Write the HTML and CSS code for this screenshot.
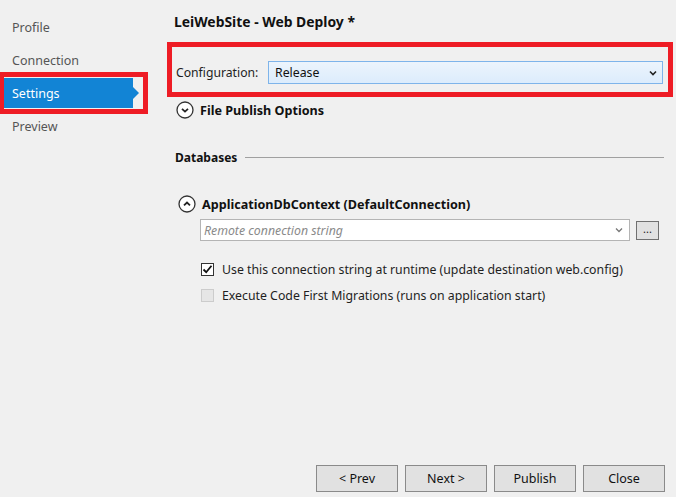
FILE: index.html
```html
<!DOCTYPE html>
<html>
<head>
<meta charset="utf-8">
<link rel="stylesheet" href="styles.css">
</head>
<body>
<div class="page">
  <nav class="nav">
    <div class="nav-item">Profile</div>
    <div class="nav-item">Connection</div>
    <div class="nav-item selected">Settings<span class="arrow"></span></div>
    <div class="nav-item">Preview</div>
    <div class="annot annot-nav"></div>
  </nav>
  <main class="main">
    <div class="title">LeiWebSite - Web Deploy *</div>
    <div class="config-row">
      <span class="label">Configuration:</span>
      <div class="select">
        <span>Release</span>
        <svg class="chev" width="8" height="6" viewBox="0 0 8 6"><path d="M1 1.5 L4 4.5 L7 1.5" fill="none" stroke="#222" stroke-width="1.6"/></svg>
      </div>
    </div>
    <div class="expander first">
      <svg class="circ" width="18" height="18" viewBox="0 0 18 18"><circle cx="9" cy="9" r="8" fill="#fff" stroke="#333" stroke-width="1.3"/><path d="M6 7.8 L9 10.6 L12 7.8" fill="none" stroke="#222" stroke-width="1.8"/></svg>
      <span class="exp-text">File Publish Options</span>
    </div>
    <div class="section">
      <span class="section-title">Databases</span>
      <span class="rule"></span>
    </div>
    <div class="expander second">
      <svg class="circ" width="18" height="18" viewBox="0 0 18 18"><circle cx="9" cy="9" r="8" fill="#fff" stroke="#333" stroke-width="1.3"/><path d="M6 10.4 L9 7.6 L12 10.4" fill="none" stroke="#222" stroke-width="1.8"/></svg>
      <span class="exp-text">ApplicationDbContext (DefaultConnection)</span>
    </div>
    <div class="conn-row">
      <div class="combo">
        <span class="placeholder">Remote connection string</span>
        <svg class="chev" width="8" height="6" viewBox="0 0 8 6"><path d="M1 1.5 L4 4.5 L7 1.5" fill="none" stroke="#777" stroke-width="1.3"/></svg>
      </div>
      <div class="dots">...</div>
    </div>
    <div class="check-row first-check">
      <span class="box checked"><svg width="11" height="11" viewBox="0 0 11 11"><path d="M1.5 5.5 L4.2 8.2 L9.5 1.8" fill="none" stroke="#111" stroke-width="1.8"/></svg></span>
      <span class="check-text">Use this connection string at runtime (update destination web.config)</span>
    </div>
    <div class="check-row second-check">
      <span class="box disabled"></span>
      <span class="check-text">Execute Code First Migrations (runs on application start)</span>
    </div>
    <div class="buttons">
      <button class="btn">&lt; Prev</button>
      <button class="btn">Next &gt;</button>
      <button class="btn">Publish</button>
      <button class="btn">Close</button>
    </div>
  </main>
</div>
</body>
</html>
```

FILE: styles.css
```css
* { box-sizing: border-box; }
html, body { margin: 0; padding: 0; }
body {
  background: #f0f0f0;
  font-family: "Noto Sans", "Open Sans", sans-serif;
  font-size: 12px;
  color: #1e1e1e;
  width: 676px;
  height: 497px;
  overflow: hidden;
}
.page {
  display: flex;
  height: 497px;
}
.nav {
  position: relative;
  width: 167px;
  flex: none;
  padding-top: 12px;
}
.nav-item {
  position: relative;
  height: 30px;
  margin-bottom: 3px;
  line-height: 31px;
  padding-left: 12px;
  color: #555;
  font-size: 12.5px;
}
.nav-item.selected {
  background: #1284d5;
  color: #fff;
  margin-left: 4px;
  width: 129px;
  padding-left: 8px;
}
.arrow {
  position: absolute;
  right: -6px;
  top: 9px;
  width: 0;
  height: 0;
  border-top: 6px solid transparent;
  border-bottom: 6px solid transparent;
  border-left: 6px solid #1284d5;
}
.annot {
  position: absolute;
  border: 5px solid #ee1c25;
}
.annot-nav {
  left: 0;
  top: 72px;
  width: 148px;
  height: 42px;
  border-left-width: 4px;
}
.main {
  flex: 1;
  display: flex;
  flex-direction: column;
  padding-right: 3px;
}
.title {
  margin-top: 14px;
  margin-left: 7px;
  height: 16px;
  line-height: 16px;
  font-weight: bold;
  font-size: 13.9px;
  color: #111;
}
.config-row {
  margin-top: 12px;
  border: 5px solid #ee1c25;
  display: flex;
  align-items: center;
  padding: 14px 5px 8px 4px;
  height: 55px;
}
.label {
  width: 92px;
  flex: none;
  color: #1e1e1e;
  font-size: 12.2px;
}
.select {
  flex: 1;
  height: 23px;
  border: 1px solid #7eb4ea;
  background: linear-gradient(#ecf4fc, #dcecfc);
  display: flex;
  align-items: center;
  justify-content: space-between;
  padding: 0 5px 0 6px;
  color: #111;
  font-size: 12.3px;
}
.chev { display: block; }
.expander {
  display: flex;
  align-items: center;
  height: 18px;
}
.expander.first {
  margin-top: 4px;
  margin-left: 9px;
}
.expander.second {
  margin-top: 30px;
  margin-left: 11px;
}
.circ { flex: none; }
.exp-text {
  margin-left: 6px;
  font-weight: bold;
  font-size: 12.6px;
  color: #111;
}
.section {
  margin-top: 30px;
  margin-left: 8px;
  margin-right: 9px;
  height: 16px;
  display: flex;
  align-items: center;
}
.section-title {
  font-weight: bold;
  color: #111;
}
.rule {
  flex: 1;
  height: 1px;
  background: #a0a0a0;
  margin-left: 8px;
}
.conn-row {
  margin-top: 6px;
  margin-left: 33px;
  display: flex;
  align-items: flex-start;
}
.combo {
  width: 430px;
  height: 22px;
  background: #fff;
  border: 1px solid #b4b4b4;
  display: flex;
  align-items: center;
  justify-content: space-between;
  padding: 0 6px 0 3px;
}
.placeholder {
  font-style: italic;
  color: #8a8a8a;
  font-size: 12.3px;
}
.dots {
  margin-left: 6px;
  margin-top: 2px;
  width: 23px;
  height: 19px;
  border: 1px solid #707070;
  background: #e1e1e1;
  font-size: 11px;
  line-height: 14px;
  text-align: center;
  color: #222;
}
.check-row {
  display: flex;
  align-items: center;
  height: 16px;
  margin-left: 34px;
}
.first-check { margin-top: 20px; }
.second-check { margin-top: 10px; }
.box {
  width: 13px;
  height: 13px;
  border: 1px solid #333;
  background: #fff;
  flex: none;
  display: flex;
  align-items: center;
  justify-content: center;
}
.box.disabled {
  border-color: #cccccc;
  background: #e6e6e6;
}
.check-text {
  margin-left: 8px;
  color: #1e1e1e;
  font-size: 12.3px;
}
.buttons {
  margin-top: auto;
  margin-bottom: 5px;
  display: flex;
  justify-content: flex-end;
  gap: 7px;
  padding-right: 8px;
}
.btn {
  width: 82px;
  height: 27px;
  border: 1px solid #8a8a8a;
  background: #e1e1e1;
  font-family: "Noto Sans", "Open Sans", sans-serif;
  font-size: 12.5px;
  color: #111;
  padding: 0;
}
```
